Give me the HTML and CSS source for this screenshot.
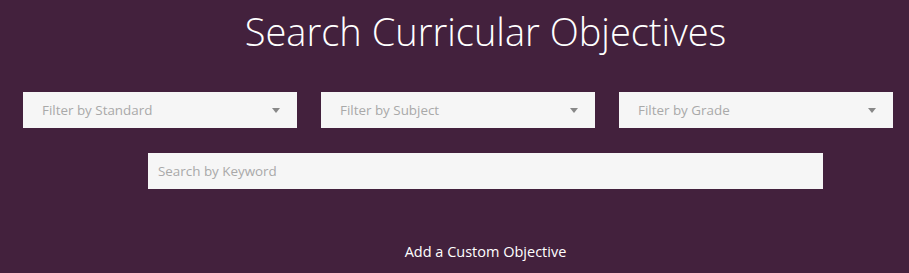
FILE: index.html
```html
<!DOCTYPE html>
<html lang="en">
<head>
	<meta charset="UTF-8">
	<title>Search Curricular Objectives</title>
	<link rel="stylesheet" href="styles.css">
</head>
<body>
	<div class="page">
		<h1 class="title">Search Curricular Objectives</h1>
		<div class="filters">
			<div class="select">
				<span class="placeholder">Filter by Standard</span>
				<span class="arrow"></span>
			</div>
			<div class="select">
				<span class="placeholder">Filter by Subject</span>
				<span class="arrow"></span>
			</div>
			<div class="select">
				<span class="placeholder">Filter by Grade</span>
				<span class="arrow"></span>
			</div>
		</div>
		<div class="search-row">
			<input class="search" type="text" placeholder="Search by Keyword">
		</div>
		<div class="custom">
			<a href="#">Add a Custom Objective</a>
		</div>
	</div>
</body>
</html>
```

FILE: styles.css
```css
html,body{margin: 0;padding: 0;}
body{background: #43213d;font-family: "Open Sans", "Liberation Sans", sans-serif;color: #fff;height: 273px;overflow: hidden;}
.page{padding-top: 8px;}
.title{margin: 0 0 0 62px;font-size: 38px;font-weight: 300;line-height: 46px;text-align: center;}
.filters{display: flex;gap: 24px;padding: 38px 16px 0 23px;}
.select{flex: 1;height: 36px;background: #f6f6f6;display: flex;align-items: center;justify-content: space-between;padding: 0 17px 0 19px;box-sizing: border-box;}
.placeholder{font-size: 13.4px;color: #a9a9a9;}
.arrow{width: 0;height: 0;border-left: 4px solid transparent;border-right: 4px solid transparent;border-top: 5px solid #888;}
.search-row{padding: 25px 86px 0 148px;}
.search{display: block;width: 100%;height: 36px;box-sizing: border-box;border: none;background: #f6f6f6;padding: 0 10px;font-family: "Open Sans", "Liberation Sans", sans-serif;font-size: 13.4px;outline: none;}
.search::placeholder{color: #a9a9a9;}
.custom{margin-left: 62px;padding-top: 53px;text-align: center;font-size: 14.5px;line-height: 20px;}
.custom a{color: #fff;text-decoration: none;}
```
